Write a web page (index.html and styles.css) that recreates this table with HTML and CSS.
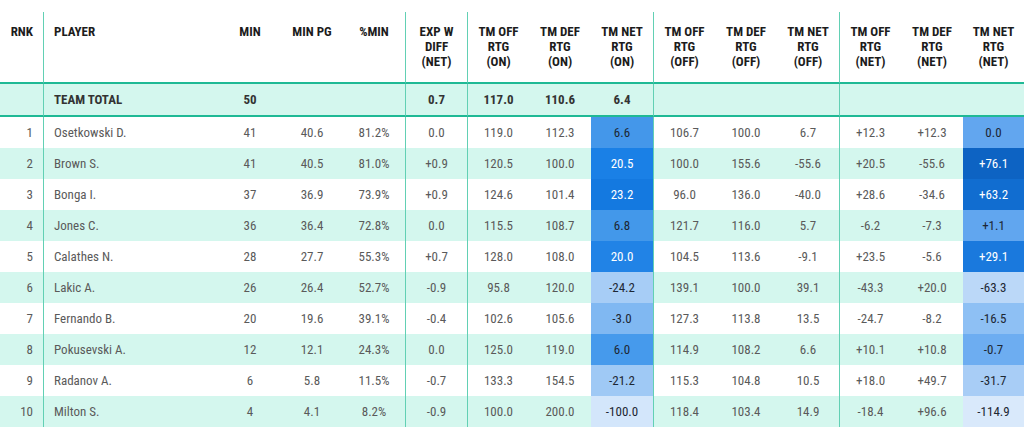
FILE: index.html
```html
<!DOCTYPE html>
<html lang="en">
<head>
<meta charset="utf-8">
<title>Lineup ratings</title>
<link rel="stylesheet" href="styles.css">
</head>
<body>
<table class="stats">
  <colgroup>
    <col class="c-rnk"><col class="c-player">
    <col class="c-num"><col class="c-num"><col class="c-num">
    <col class="c-num"><col class="c-num"><col class="c-num"><col class="c-num">
    <col class="c-num"><col class="c-num"><col class="c-num">
    <col class="c-num"><col class="c-num"><col class="c-last">
  </colgroup>
  <thead>
    <tr>
      <th class="rnk">RNK</th>
      <th class="player vl">PLAYER</th>
      <th>MIN</th>
      <th>MIN PG</th>
      <th>%MIN</th>
      <th class="vl">EXP W<br>DIFF<br>(NET)</th>
      <th class="vl">TM OFF<br>RTG<br>(ON)</th>
      <th>TM DEF<br>RTG<br>(ON)</th>
      <th>TM NET<br>RTG<br>(ON)</th>
      <th class="vl">TM OFF<br>RTG<br>(OFF)</th>
      <th>TM DEF<br>RTG<br>(OFF)</th>
      <th>TM NET<br>RTG<br>(OFF)</th>
      <th class="vl">TM OFF<br>RTG<br>(NET)</th>
      <th>TM DEF<br>RTG<br>(NET)</th>
      <th>TM NET<br>RTG<br>(NET)</th>
    </tr>
  </thead>
  <tbody>
    <tr class="total">
      <td class="rnk"></td>
      <td class="player vl">TEAM TOTAL</td>
      <td>50</td>
      <td></td>
      <td></td>
      <td class="vl">0.7</td>
      <td class="vl">117.0</td>
      <td>110.6</td>
      <td>6.4</td>
      <td class="vl"></td>
      <td></td>
      <td></td>
      <td class="vl"></td>
      <td></td>
      <td></td>
    </tr>
    <tr>
      <td class="rnk">1</td><td class="player vl">Osetkowski D.</td>
      <td>41</td><td>40.6</td><td>81.2%</td>
      <td class="vl">0.0</td>
      <td class="vl">119.0</td><td>112.3</td><td class="heat" style="background:#4497ea">6.6</td>
      <td class="vl">106.7</td><td>100.0</td><td>6.7</td>
      <td class="vl">+12.3</td><td>+12.3</td><td class="heat" style="background:#62a6ef">0.0</td>
    </tr>
    <tr class="alt">
      <td class="rnk">2</td><td class="player vl">Brown S.</td>
      <td>41</td><td>40.5</td><td>81.0%</td>
      <td class="vl">+0.9</td>
      <td class="vl">120.5</td><td>100.0</td><td class="heat light" style="background:#1a80e6">20.5</td>
      <td class="vl">100.0</td><td>155.6</td><td>-55.6</td>
      <td class="vl">+20.5</td><td>-55.6</td><td class="heat light" style="background:#0d63c3">+76.1</td>
    </tr>
    <tr>
      <td class="rnk">3</td><td class="player vl">Bonga I.</td>
      <td>37</td><td>36.9</td><td>73.9%</td>
      <td class="vl">+0.9</td>
      <td class="vl">124.6</td><td>101.4</td><td class="heat light" style="background:#1479e0">23.2</td>
      <td class="vl">96.0</td><td>136.0</td><td>-40.0</td>
      <td class="vl">+28.6</td><td>-34.6</td><td class="heat light" style="background:#116dd0">+63.2</td>
    </tr>
    <tr class="alt">
      <td class="rnk">4</td><td class="player vl">Jones C.</td>
      <td>36</td><td>36.4</td><td>72.8%</td>
      <td class="vl">0.0</td>
      <td class="vl">115.5</td><td>108.7</td><td class="heat" style="background:#4398ea">6.8</td>
      <td class="vl">121.7</td><td>116.0</td><td>5.7</td>
      <td class="vl">-6.2</td><td>-7.3</td><td class="heat" style="background:#61a6ef">+1.1</td>
    </tr>
    <tr>
      <td class="rnk">5</td><td class="player vl">Calathes N.</td>
      <td>28</td><td>27.7</td><td>55.3%</td>
      <td class="vl">+0.7</td>
      <td class="vl">128.0</td><td>108.0</td><td class="heat light" style="background:#2183e6">20.0</td>
      <td class="vl">104.5</td><td>113.6</td><td>-9.1</td>
      <td class="vl">+23.5</td><td>-5.6</td><td class="heat light" style="background:#1a79dd">+29.1</td>
    </tr>
    <tr class="alt">
      <td class="rnk">6</td><td class="player vl">Lakic A.</td>
      <td>26</td><td>26.4</td><td>52.7%</td>
      <td class="vl">-0.9</td>
      <td class="vl">95.8</td><td>120.0</td><td class="heat" style="background:#a7cdf6">-24.2</td>
      <td class="vl">139.1</td><td>100.0</td><td>39.1</td>
      <td class="vl">-43.3</td><td>+20.0</td><td class="heat" style="background:#bbd8f8">-63.3</td>
    </tr>
    <tr>
      <td class="rnk">7</td><td class="player vl">Fernando B.</td>
      <td>20</td><td>19.6</td><td>39.1%</td>
      <td class="vl">-0.4</td>
      <td class="vl">102.6</td><td>105.6</td><td class="heat" style="background:#80b8f2">-3.0</td>
      <td class="vl">127.3</td><td>113.8</td><td>13.5</td>
      <td class="vl">-24.7</td><td>-8.2</td><td class="heat" style="background:#8ec0f4">-16.5</td>
    </tr>
    <tr class="alt">
      <td class="rnk">8</td><td class="player vl">Pokusevski A.</td>
      <td>12</td><td>12.1</td><td>24.3%</td>
      <td class="vl">0.0</td>
      <td class="vl">125.0</td><td>119.0</td><td class="heat" style="background:#469aec">6.0</td>
      <td class="vl">114.9</td><td>108.2</td><td>6.6</td>
      <td class="vl">+10.1</td><td>+10.8</td><td class="heat" style="background:#6dadf1">-0.7</td>
    </tr>
    <tr>
      <td class="rnk">9</td><td class="player vl">Radanov A.</td>
      <td>6</td><td>5.8</td><td>11.5%</td>
      <td class="vl">-0.7</td>
      <td class="vl">133.3</td><td>154.5</td><td class="heat" style="background:#9fc9f5">-21.2</td>
      <td class="vl">115.3</td><td>104.8</td><td>10.5</td>
      <td class="vl">+18.0</td><td>+49.7</td><td class="heat" style="background:#a8cdf6">-31.7</td>
    </tr>
    <tr class="alt">
      <td class="rnk">10</td><td class="player vl">Milton S.</td>
      <td>4</td><td>4.1</td><td>8.2%</td>
      <td class="vl">-0.9</td>
      <td class="vl">100.0</td><td>200.0</td><td class="heat" style="background:#d3e6fb">-100.0</td>
      <td class="vl">118.4</td><td>103.4</td><td>14.9</td>
      <td class="vl">-18.4</td><td>+96.6</td><td class="heat" style="background:#d9e9fb">-114.9</td>
    </tr>
  </tbody>
</table>
</body>
</html>
```

FILE: styles.css
```css
html, body {
  margin: 0;
  background: #ffffff;
}

body {
  padding-top: 12px;
  font-family: "Roboto Condensed", "Liberation Sans Narrow", "Roboto", "Liberation Sans", sans-serif;
  font-stretch: condensed;
  overflow: hidden;
}

.stats {
  width: 1024px;
  table-layout: fixed;
  border-collapse: separate;
  border-spacing: 0;
  font-size: 13px;
}

.c-rnk { width: 43px; }
.c-player { width: 176px; }
.c-num { width: 62px; }
.c-last { width: 61px; }

.stats th {
  padding: 12px 0 13px;
  vertical-align: top;
  text-align: center;
  font-weight: 700;
  color: #1c1c1c;
  line-height: 15px;
  border-bottom: 2px solid #1fb995;
}

.stats td {
  height: 31px;
  padding: 0;
  text-align: center;
  vertical-align: middle;
  color: #5a5a5a;
  line-height: 15px;
}

.stats .rnk {
  text-align: right;
  padding-right: 10px;
}

.stats .player {
  text-align: left;
  padding-left: 10px;
}

.stats .vl {
  border-left: 1px solid #62d0b4;
}

.stats tr.total td {
  background: #d4f7ee;
  font-weight: 700;
  color: #333333;
  border-bottom: 2px solid #1fb995;
}

.stats tr.alt td {
  background: #d4f7ee;
}

.stats td.heat {
  color: #1d2733;
}

.stats td.heat.light {
  color: #ffffff;
}
```
